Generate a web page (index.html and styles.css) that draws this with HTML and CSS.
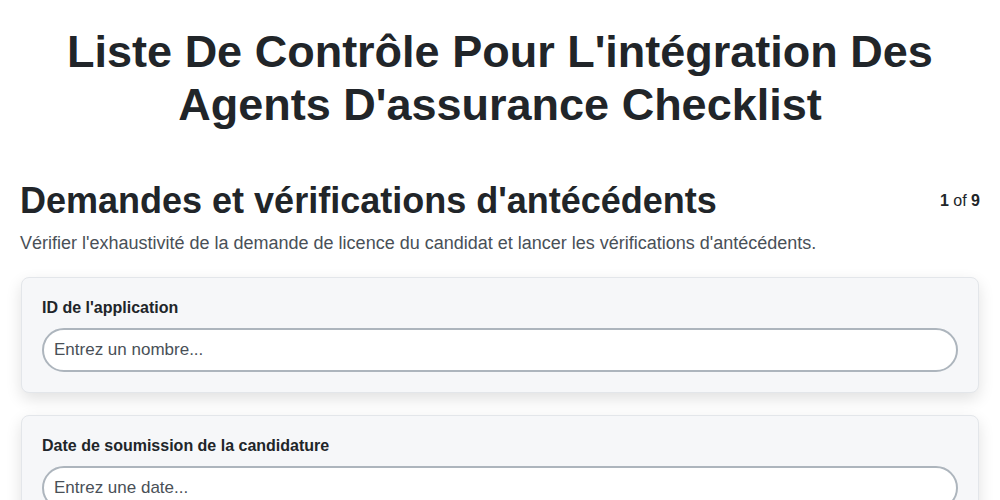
FILE: index.html
```html
<!DOCTYPE html>
<html lang="fr">
<head>
  <meta charset="utf-8" />
  <meta name="viewport" content="width=device-width, initial-scale=1" />
  <title>Liste De Contrôle Pour L'intégration Des Agents D'assurance Checklist</title>
  <link rel="stylesheet" href="styles.css">
</head>
<body>
  <main class="page">
    <h1 class="page-title">Liste De Contrôle Pour L'intégration Des Agents D'assurance Checklist</h1>

    <section class="step">
      <div class="step-head">
        <h2 class="step-title">Demandes et vérifications d'antécédents</h2>
        <div class="step-count"><b>1</b> of <b>9</b></div>
      </div>
      <p class="step-desc">Vérifier l'exhaustivité de la demande de licence du candidat et lancer les vérifications d'antécédents.</p>

      <div class="field-card">
        <label class="field-label" for="app-id">ID de l'application</label>
        <input class="field-input" id="app-id" type="text" placeholder="Entrez un nombre..." />
      </div>

      <div class="field-card">
        <label class="field-label" for="app-date">Date de soumission de la candidature</label>
        <input class="field-input" id="app-date" type="text" placeholder="Entrez une date..." />
      </div>
    </section>
  </main>
</body>
</html>
```

FILE: styles.css
```css
:root {
  --text: #212529;
  --muted: #495057;
  --card: #f6f7f9;
  --card-border: #e3e6ea;
  --input-border: #adb5bd;
}
* { box-sizing: border-box; }
html, body {
  margin: 0;
  font-family: "Liberation Sans", Arial, sans-serif;
  color: var(--text);
  background: #fff;
}
.page {
  max-width: 1000px;
  margin: 0 auto;
  padding: 25px 21px 40px 21px;
}
.page-title {
  margin: 0 0 48px;
  text-align: center;
  font-size: 45px;
  line-height: 53px;
  font-weight: 700;
}
.step-head {
  display: flex;
  align-items: center;
  justify-content: space-between;
  gap: 16px;
}
.step-title {
  margin: 0 0 0 -1px;
  font-size: 36px;
  line-height: 44px;
  font-weight: 700;
}
.step-count { font-size: 16px; margin-right: -1px; }
.step-desc {
  margin: 10px -1px 23px;
  font-size: 18px;
  color: var(--muted);
}
.field-card {
  background: var(--card);
  border: 1px solid var(--card-border);
  border-radius: 8px;
  box-shadow: 0 6px 16px rgba(0, 0, 0, 0.12);
  padding: 21px 20px 20px;
  margin-bottom: 22px;
}
.field-label {
  display: block;
  font-size: 16px;
  font-weight: 700;
  margin-bottom: 11px;
}
.field-input {
  display: block;
  width: 100%;
  height: 44px;
  padding: 0 10px;
  border: 2px solid var(--input-border);
  border-radius: 22px;
  background: #fff;
  font: inherit;
  font-size: 17px;
  color: var(--text);
}
.field-input::placeholder { color: var(--muted); }
```
